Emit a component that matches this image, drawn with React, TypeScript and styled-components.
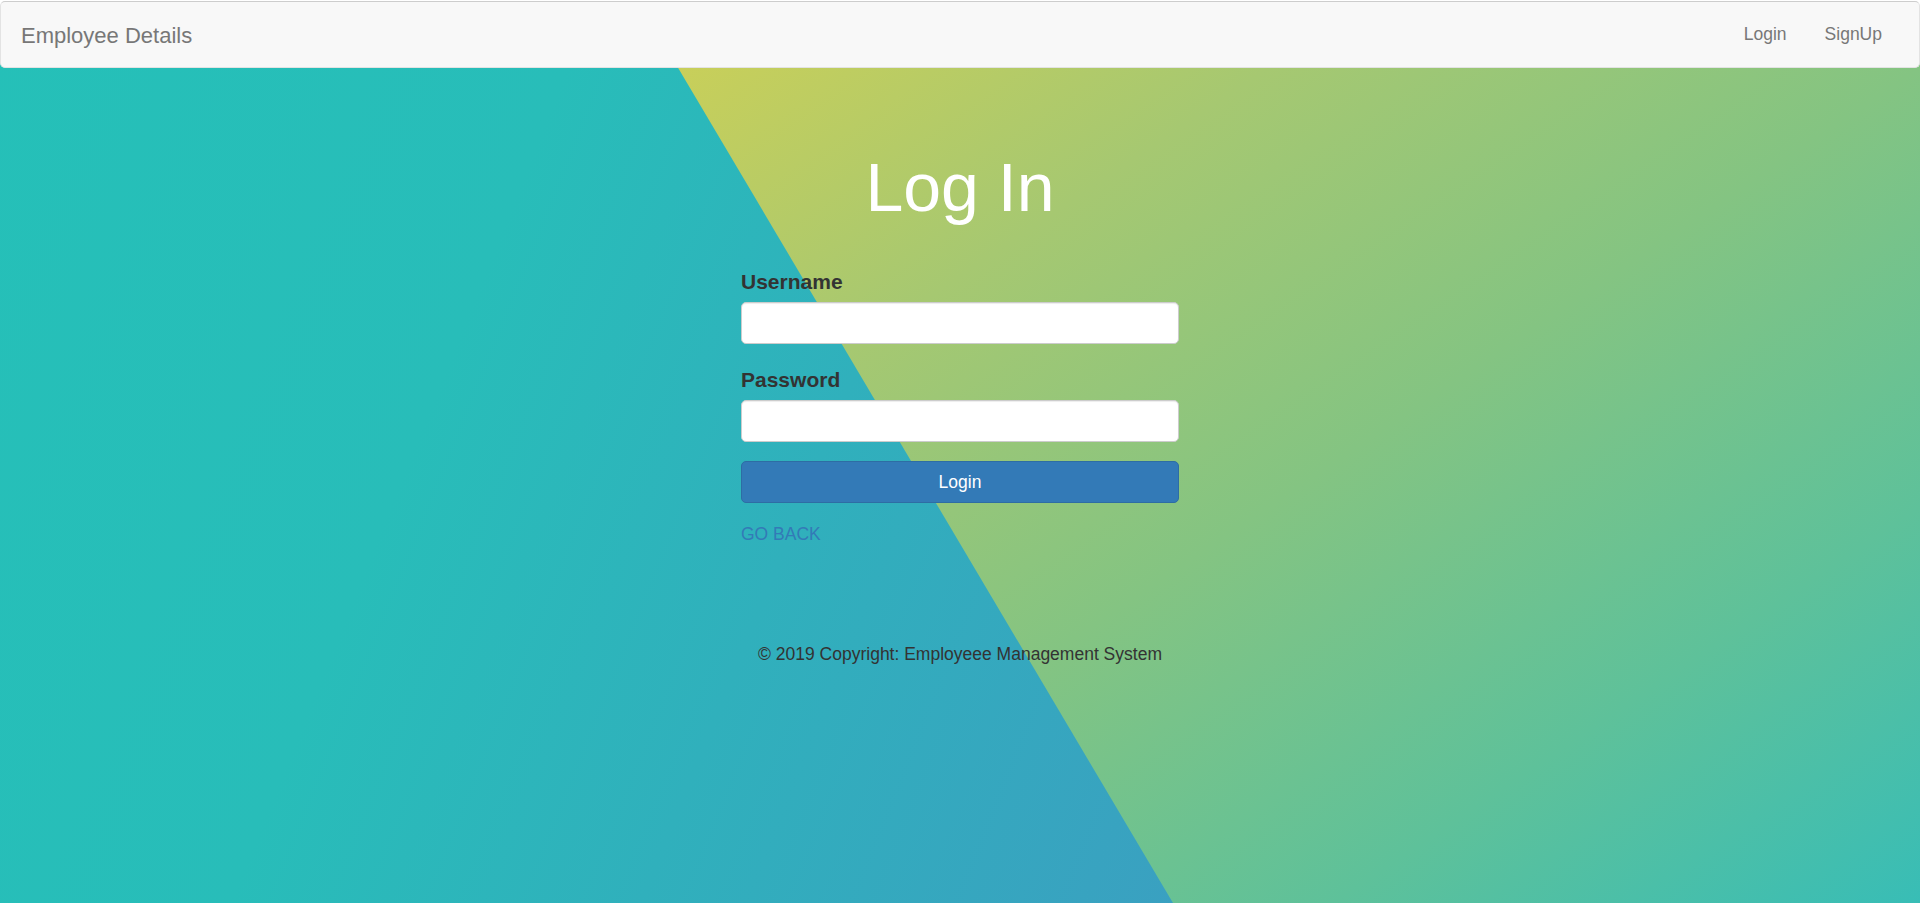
import React from "react";
import styled, { createGlobalStyle } from "styled-components";

const GlobalStyle = createGlobalStyle`
  html, body {
    margin: 0;
    padding: 0;
    background: #ffffff;
  }
  body {
    font-family: "Liberation Sans", Arial, "Helvetica Neue", sans-serif;
    font-size: 17.5px;
    color: #333333;
  }
  * {
    box-sizing: border-box;
  }
`;

const Page = styled.div`
  position: relative;
  min-height: 100vh;
  overflow: hidden;
  background:
    linear-gradient(#ffffff, #ffffff) top left / 100% 34px no-repeat,
    linear-gradient(
      146deg,
      #c9cf59 0%,
      #c8cf5a 24%,
      #a6c871 42%,
      #84c482 62%,
      #5ec19a 82%,
      #38bdb6 100%
    );

  &::before {
    content: "";
    position: absolute;
    inset: 0;
    clip-path: polygon(0 34px, 658px 34px, 1173px 100%, 0 100%);
    background: linear-gradient(
      112deg,
      #25c0b8 0%,
      #28bdb9 26%,
      #30b0bc 44%,
      #3aa0c1 68%,
      #3c9cc2 100%
    );
  }
`;

const Content = styled.div`
  position: relative;
  z-index: 1;
  padding-top: 1px;
`;

const Navbar = styled.nav`
  display: flex;
  justify-content: space-between;
  align-items: flex-start;
  height: 67px;
  background: #f8f8f8;
  border: 1px solid #e3e3e3;
  border-top-color: #cdcdcd;
  border-radius: 5px;
`;

const Brand = styled.a`
  display: block;
  padding: 21px 20px 0 20px;
  font-size: 22px;
  line-height: 25px;
  color: #777777;
  text-decoration: none;
`;

const NavList = styled.ul`
  display: flex;
  list-style: none;
  margin: 0 18px 0 0;
  padding: 0;
`;

const NavLink = styled.a`
  display: block;
  padding: 20px 19px 0 19px;
  font-size: 17.5px;
  line-height: 25px;
  color: #777777;
  text-decoration: none;
`;

const Main = styled.main`
  display: flex;
  flex-direction: column;
  align-items: center;
  padding-top: 85px;
`;

const Title = styled.h1`
  margin: 0;
  font-size: 68px;
  font-weight: 400;
  line-height: 68px;
  color: #ffffff;
`;

const Form = styled.form`
  width: 438px;
  margin-top: 48px;
  display: flex;
  flex-direction: column;
`;

const FormGroup = styled.div<{ $last?: boolean }>`
  display: flex;
  flex-direction: column;
  margin-bottom: ${(p) => (p.$last ? "19px" : "23px")};
`;

const Label = styled.label`
  display: block;
  font-size: 21px;
  font-weight: 700;
  line-height: 25px;
  color: #333333;
  margin-bottom: 8px;
`;

const Input = styled.input`
  display: block;
  width: 100%;
  height: 42px;
  padding: 8px 15px;
  font-family: inherit;
  font-size: 17.5px;
  color: #555555;
  background: #ffffff;
  border: 1px solid #cccccc;
  border-radius: 5px;
  box-shadow: inset 0 1px 1px rgba(0, 0, 0, 0.075);
  outline: none;
`;

const SubmitButton = styled.button`
  display: block;
  width: 100%;
  height: 42px;
  padding: 0;
  font-family: inherit;
  font-size: 17.5px;
  line-height: 25px;
  color: #ffffff;
  background: #337ab7;
  border: 1px solid #2e6da4;
  border-radius: 5px;
  cursor: pointer;
`;

const BackLink = styled.a`
  display: block;
  margin-top: 19px;
  font-size: 17.5px;
  line-height: 25px;
  color: #337ab7;
  text-decoration: none;
`;

const Footer = styled.footer`
  margin-top: 95px;
  text-align: center;
  font-size: 17.5px;
  line-height: 25px;
  color: #333333;
`;

export default function App() {
  return (
    <>
      <GlobalStyle />
      <Page>
        <Content>
          <Navbar>
            <Brand href="#">Employee Details</Brand>
            <NavList>
              <li>
                <NavLink href="#">Login</NavLink>
              </li>
              <li>
                <NavLink href="#">SignUp</NavLink>
              </li>
            </NavList>
          </Navbar>
          <Main>
            <Title>Log In</Title>
            <Form onSubmit={(e) => e.preventDefault()}>
              <FormGroup>
                <Label htmlFor="username">Username</Label>
                <Input id="username" type="text" />
              </FormGroup>
              <FormGroup $last>
                <Label htmlFor="password">Password</Label>
                <Input id="password" type="password" />
              </FormGroup>
              <SubmitButton type="submit">Login</SubmitButton>
              <BackLink href="#">GO BACK</BackLink>
            </Form>
            <Footer>© 2019 Copyright: Employeee Management System</Footer>
          </Main>
        </Content>
      </Page>
    </>
  );
}
